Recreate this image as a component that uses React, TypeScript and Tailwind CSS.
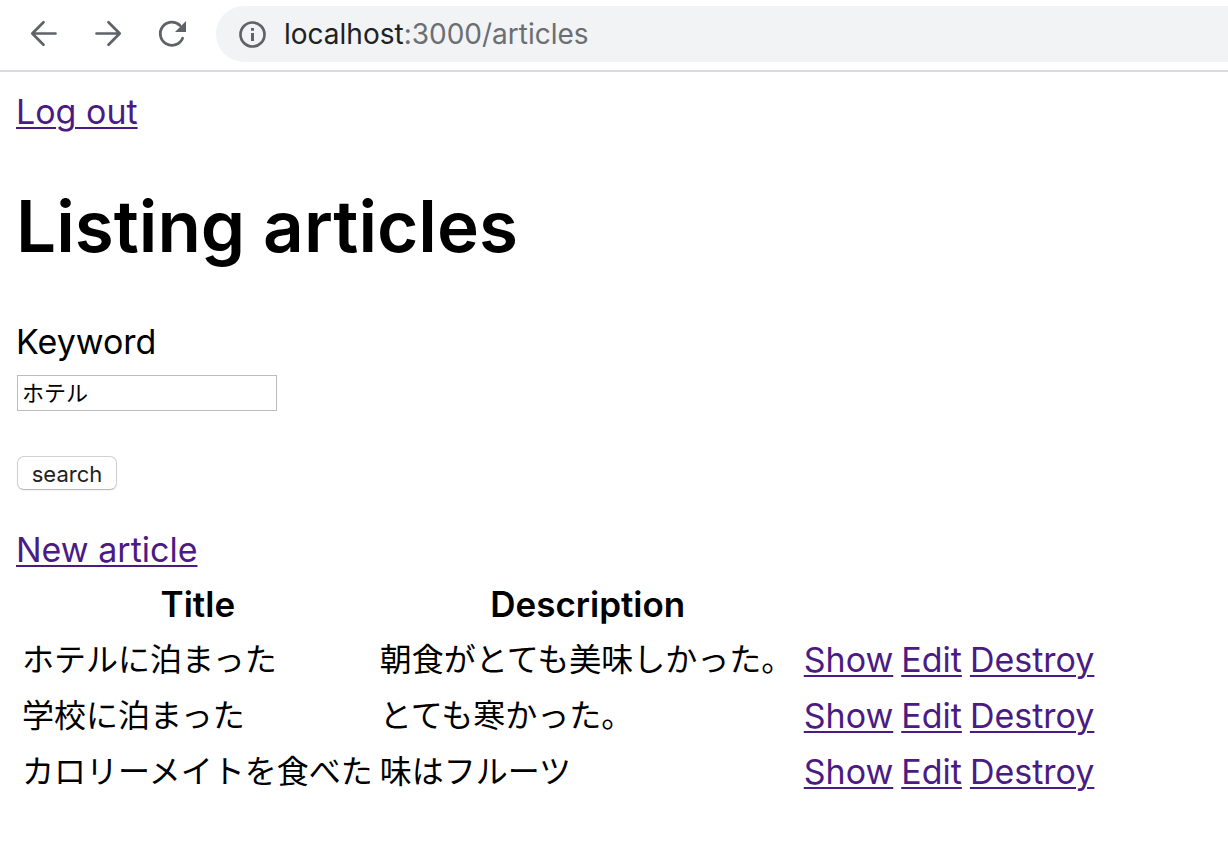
import React, { useState } from "react";

type Article = { id: number; title: string; description: string };

const articles: Article[] = [
  { id: 1, title: "ホテルに泊まった", description: "朝食がとても美味しかった。" },
  { id: 2, title: "学校に泊まった", description: "とても寒かった。" },
  { id: 3, title: "カロリーメイトを食べた", description: "味はフルーツ" },
];

const linkClass = "text-[#4b1b85] underline decoration-2 underline-offset-[3px]";

function Toolbar() {
  return (
    <header className="flex h-[72px] items-center border-b-2 border-[#dadade] bg-white pb-0.5 pl-7 text-[#5f6368]">
      <nav className="flex shrink-0 items-center gap-8" aria-label="Browser">
        <button type="button" aria-label="Back" className="size-8">
          <svg viewBox="0 0 32 32" className="size-8" fill="none" stroke="currentColor" strokeWidth="2.7" strokeLinecap="round" strokeLinejoin="round">
            <path d="M27.5 15.5H4.5M15.5 4.2L4.3 15.5L15.5 26.8" />
          </svg>
        </button>
        <button type="button" aria-label="Forward" className="size-8">
          <svg viewBox="0 0 32 32" className="size-8" fill="none" stroke="currentColor" strokeWidth="2.7" strokeLinecap="round" strokeLinejoin="round">
            <path d="M4.5 15.5H27.5M16.5 4.2L27.7 15.5L16.5 26.8" />
          </svg>
        </button>
        <button type="button" aria-label="Reload" className="size-8">
          <svg viewBox="0 0 32 32" className="size-8" fill="none">
            <path d="M26.6 20.2A11.6 11.6 0 1 1 24 7.4" stroke="currentColor" strokeWidth="2.8" strokeLinecap="round" />
            <path d="M30 3V14H19Z" fill="currentColor" />
          </svg>
        </button>
      </nav>
      <div className="ml-7 flex h-14 min-w-0 flex-1 items-center gap-[18px] rounded-l-full bg-[#f1f3f4] pl-[22px]">
        <svg viewBox="0 0 28 28" className="size-7 shrink-0" fill="none">
          <circle cx="14.5" cy="14.5" r="12" stroke="currentColor" strokeWidth="2.7" />
          <path d="M13 8h3v2.7h-3zM13 12.9h3v8h-3z" fill="currentColor" />
        </svg>
        <p className="whitespace-nowrap font-['Inter',sans-serif] text-[28px] leading-9 text-[#6b6e72]">
          <span className="text-[#202124]">localhost</span>:3000/articles
        </p>
      </div>
    </header>
  );
}

export default function App() {
  const [keyword, setKeyword] = useState("ホテル");
  return (
    <div className="min-h-screen bg-white font-['Inter','Noto_Sans_CJK_JP',sans-serif] text-[34px] leading-[48px] text-black">
      <Toolbar />
      <main className="p-4">
        <p><a href="#logout" className={linkClass}>Log out</a></p>
        <h1 className="mt-9 text-[71px] leading-[108px] font-semibold">Listing articles</h1>
        <form onSubmit={(e) => e.preventDefault()} className="mt-[38px] flex flex-col items-start">
          <label htmlFor="keyword">Keyword</label>
          <input
            id="keyword"
            type="text"
            value={keyword}
            onChange={(e) => setKeyword(e.target.value)}
            className="mt-[9px] ml-px h-9 w-[260px] border border-[#bdbdbd] bg-white px-1 pb-1 text-[22px] leading-8 outline-none"
          />
          <button
            type="submit"
            className="mt-[45px] ml-px h-[34px] w-[100px] rounded-[7px] border border-[#d0d0d0] border-b-[#b8b8b8] bg-white pt-px text-[22px] leading-8 text-[#222] shadow-xs"
          >
            search
          </button>
        </form>
        <p className="mt-9"><a href="#new" className={linkClass}>New article</a></p>
        <table className="border-separate border-spacing-1 whitespace-nowrap">
          <thead>
            <tr className="h-[52px] text-[35px]">
              <th className="pl-[2px] font-semibold">Title</th>
              <th className="min-w-[420px] px-[2px] font-semibold">Description</th>
              <th colSpan={3}></th>
            </tr>
          </thead>
          <tbody>
            {articles.map((a) => (
              <tr key={a.id} className="h-[52px]">
                <td className="pr-px pl-[2px] text-[32px]">{a.title}</td>
                <td className="px-[2px] text-[32px]">{a.description}</td>
                <td className="px-[2px]"><a href={`#show-${a.id}`} className={linkClass}>Show</a></td>
                <td className="px-[2px]"><a href={`#edit-${a.id}`} className={linkClass}>Edit</a></td>
                <td className="px-[2px]"><a href={`#destroy-${a.id}`} className={linkClass}>Destroy</a></td>
              </tr>
            ))}
          </tbody>
        </table>
      </main>
    </div>
  );
}
